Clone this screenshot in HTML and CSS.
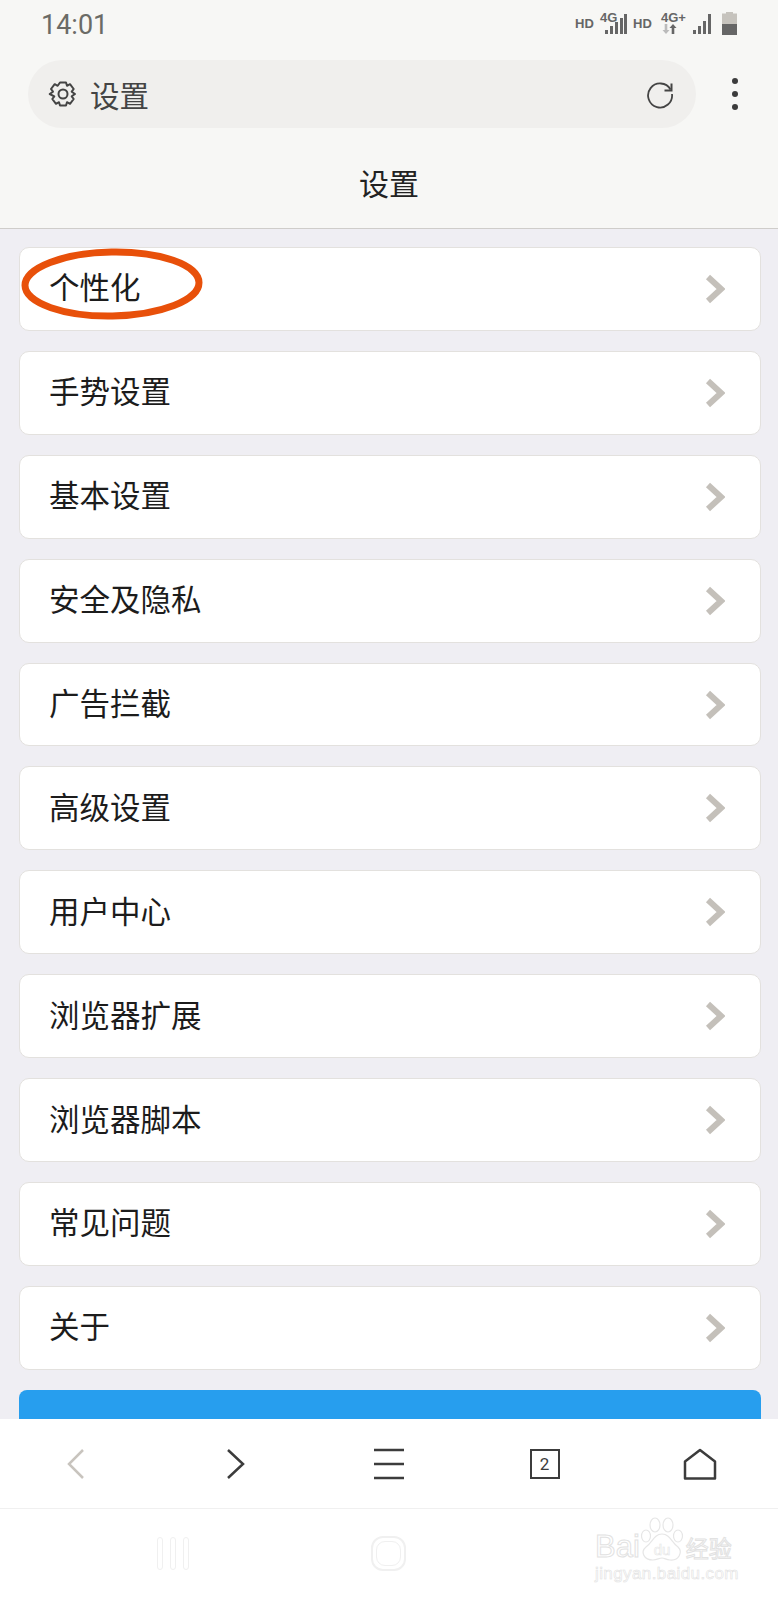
FILE: index.html
```html
<!DOCTYPE html>
<html lang="zh-CN">
<head>
    <meta charset="UTF-8">
    <meta name="viewport" content="width=device-width, initial-scale=1.0">
    <title>设置</title>
    <link rel="stylesheet" href="styles.css">
</head>
<body>
    <div class="screen">
        <div class="header">
            <div class="status-bar">
                <span class="time">14:01</span>
                <svg class="status-icons" width="190" height="50" viewBox="0 0 190 50">
                    <g fill="#666">
                        <text x="15" y="28" class="st-label">HD</text>
                        <text x="40" y="22" class="st-label">4G</text>
                        <rect x="45" y="30" width="3" height="4"/>
                        <rect x="50" y="26" width="3" height="8"/>
                        <rect x="55" y="22" width="3" height="12"/>
                        <rect x="60" y="18" width="3" height="16"/>
                        <rect x="64" y="14" width="3" height="20"/>
                        <text x="73" y="28" class="st-label">HD</text>
                        <text x="101" y="22" class="st-label">4G+</text>
                        <path d="M113 24l-3.500 4h2.200v6h2.600v-6h2.200z"/>
                        <rect x="133" y="30" width="3" height="4"/>
                        <rect x="138" y="26" width="3" height="8"/>
                        <rect x="143" y="21" width="3" height="13"/>
                        <rect x="148" y="14" width="3" height="20"/>
                        <rect x="162" y="24" width="15" height="11"/>
                    </g>
                    <path d="M106 34l-3.500-4h2.200v-6h2.600v6h2.200z" fill="#bbb"/>
                    <path d="M162 24v-10.500h4v-1.500h7v1.500h4v10.500z" fill="#c6c3bd"/>
                </svg>
            </div>
            <div class="url-row">
                <div class="url-bar">
                    <svg class="gear" width="30" height="30" viewBox="0 0 30 30" fill="none" stroke="#444" stroke-width="2">
                        <path d="M12 3.500h6l1 3.300 3-1.600 3.700 4.800-2 2.700 3.300 2.300-3.300 2.300 2 2.700-3.700 4.800-3-1.600-1 3.300h-6l-1-3.300-3 1.600-3.700-4.800 2-2.700L1.700 15 5 12.700l-2-2.700 3.700-4.800 3 1.600z" stroke-linejoin="round"/>
                        <circle cx="15" cy="15" r="4.500"/>
                    </svg>
                    <span class="url-text">设置</span>
                    <svg class="reload" width="30" height="30" viewBox="0 0 30 30" fill="none" stroke="#444" stroke-width="1.800">
                        <path d="M25.500 10.500A12 12 0 1 0 27 15"/>
                        <path d="M26.500 4.500v7h-7" stroke-width="2"/>
                    </svg>
                </div>
                <div class="more-btn"><i></i><i></i><i></i></div>
            </div>
            <div class="page-title">设置</div>
        </div>

        <div class="settings">
            <div class="item">个性化<svg class="arrow" width="20" height="30" viewBox="0 0 20 30"><polyline points="3,3 16,15 3,27"/></svg></div>
            <div class="item">手势设置<svg class="arrow" width="20" height="30" viewBox="0 0 20 30"><polyline points="3,3 16,15 3,27"/></svg></div>
            <div class="item">基本设置<svg class="arrow" width="20" height="30" viewBox="0 0 20 30"><polyline points="3,3 16,15 3,27"/></svg></div>
            <div class="item">安全及隐私<svg class="arrow" width="20" height="30" viewBox="0 0 20 30"><polyline points="3,3 16,15 3,27"/></svg></div>
            <div class="item">广告拦截<svg class="arrow" width="20" height="30" viewBox="0 0 20 30"><polyline points="3,3 16,15 3,27"/></svg></div>
            <div class="item">高级设置<svg class="arrow" width="20" height="30" viewBox="0 0 20 30"><polyline points="3,3 16,15 3,27"/></svg></div>
            <div class="item">用户中心<svg class="arrow" width="20" height="30" viewBox="0 0 20 30"><polyline points="3,3 16,15 3,27"/></svg></div>
            <div class="item">浏览器扩展<svg class="arrow" width="20" height="30" viewBox="0 0 20 30"><polyline points="3,3 16,15 3,27"/></svg></div>
            <div class="item">浏览器脚本<svg class="arrow" width="20" height="30" viewBox="0 0 20 30"><polyline points="3,3 16,15 3,27"/></svg></div>
            <div class="item">常见问题<svg class="arrow" width="20" height="30" viewBox="0 0 20 30"><polyline points="3,3 16,15 3,27"/></svg></div>
            <div class="item">关于<svg class="arrow" width="20" height="30" viewBox="0 0 20 30"><polyline points="3,3 16,15 3,27"/></svg></div>
            <div class="blue-btn"></div>
            <svg class="circle-mark" width="190" height="80" viewBox="0 0 190 80">
                <ellipse cx="91" cy="38" rx="87" ry="32" transform="rotate(-1 91 38)"/>
            </svg>
        </div>

        <div class="toolbar">
            <svg width="34" height="34" viewBox="0 0 34 34" class="tool-icon"><polyline points="22,3 8,17 22,31" stroke="#c8c4be"/></svg>
            <svg width="34" height="34" viewBox="0 0 34 34" class="tool-icon"><polyline points="12,3 27,17 12,31"/></svg>
            <svg width="34" height="34" viewBox="0 0 34 34" class="tool-icon"><path d="M2 3h30M2 17h30M2 31h30"/></svg>
            <div class="tabs-count">2</div>
            <svg width="34" height="34" viewBox="0 0 34 34" class="tool-icon"><path d="M2 31.500V14.500L17 3l15 11.500v17z" stroke-linejoin="round"/></svg>
        </div>

        <div class="nav-bar">
            <div class="nav-recent"><i></i><i></i><i></i></div>
            <div class="nav-home"><i></i></div>
            <div class="nav-spacer"></div>
            <div class="watermark">
                <div class="wm-top">
                    <span>Bai</span>
                    <svg class="wm-paw" width="44" height="46" viewBox="0 0 44 46" fill="none" stroke="#e6e6e6" stroke-width="1.200">
                        <ellipse cx="15" cy="8" rx="5" ry="7"/>
                        <ellipse cx="28" cy="8" rx="5" ry="7"/>
                        <ellipse cx="6" cy="19" rx="4.500" ry="6"/>
                        <ellipse cx="38" cy="19" rx="4.500" ry="6"/>
                        <path d="M22 17c8 0 10 9 16 13 5 5 1 14-8 13-4 0-5-2-8-2s-5 2-9 2C4 43 0 35 6 30c6-4 8-13 16-13z"/>
                        <text x="22" y="38" class="wm-du">du</text>
                    </svg>
                    <span class="wm-cn">经验</span>
                </div>
                <div class="wm-url">jingyan.baidu.com</div>
            </div>
        </div>
    </div>
</body>
</html>
```

FILE: styles.css
```css
* { box-sizing: border-box; }
body { margin: 0; background: #fff; font-family: "Noto Sans CJK SC", "Liberation Sans", sans-serif; }
.screen { width: 778px; height: 1600px; display: flex; flex-direction: column; overflow: hidden; }

/* Topo */
.header { height: 229px; flex: none; background: #f7f7f5; border-bottom: 1px solid #cfcdca; }
.status-bar { height: 50px; padding: 0 28px 0 41px; display: flex; justify-content: space-between; align-items: center; }
.time { font-family: Roboto, sans-serif; font-size: 27px; color: #6b6b66; }
.status-icons { display: block; }
.st-label { font-family: "Liberation Sans", sans-serif; font-size: 13px; font-weight: bold; }
.url-row { display: flex; align-items: center; height: 68px; margin-top: 10px; padding-left: 28px; }
.url-bar { width: 668px; height: 68px; border-radius: 34px; background: #f0efed; display: flex; align-items: center; padding: 0 21px 0 20px; }
.gear { flex: none; }
.url-text { font-size: 29.500px; color: #444; margin-left: 12px; flex: 1; }
.reload { flex: none; }
.more-btn { display: flex; flex-direction: column; gap: 7px; margin-left: 36px; }
.more-btn i { width: 6px; height: 6px; border-radius: 50%; background: #3c3c3c; }
.page-title { text-align: center; font-size: 30px; line-height: 44px; color: #222; margin-top: 32px; }

/* Lista */
.settings { position: relative; flex: 1; min-height: 0; overflow: hidden; background: #efeef3; padding: 18px 17px 0 19px; display: flex; flex-direction: column; gap: 20px; }
.item { flex: none; height: 83.900px; background: #fff; border: 1px solid #e3e1de; border-radius: 10px; padding: 0 35px 5px 29px; display: flex; align-items: center; justify-content: space-between; font-size: 30.500px; color: #1c1c1c; }
.arrow { flex: none; margin-top: 5px; }
.arrow polyline { fill: none; stroke: #c4c0ba; stroke-width: 6; }
.blue-btn { flex: none; height: 60px; background: #279eee; border-radius: 8px 8px 0 0; }
.circle-mark { position: absolute; left: 21px; top: 17px; }
.circle-mark ellipse { fill: none; stroke: #e8500a; stroke-width: 7; }

/* Barra inferior */
.toolbar { flex: none; height: 90px; background: #fff; border-bottom: 1px solid #f0f0f0; display: grid; grid-template-columns: repeat(5, 1fr); align-items: center; justify-items: center; }
.tool-icon { fill: none; stroke: #3c3c3c; stroke-width: 2.500; }
.tabs-count { width: 30px; height: 30px; border: 2px solid #3c3c3c; font-family: Roboto, sans-serif; font-size: 17px; color: #3c3c3c; display: flex; align-items: center; justify-content: center; }

.nav-bar { position: relative; flex: none; height: 91px; background: #fff; display: grid; grid-template-columns: repeat(3, 1fr); align-items: center; justify-items: center; padding-bottom: 2px; }
.nav-recent { display: flex; gap: 7px; margin-left: 86px; }
.nav-recent i { width: 6px; height: 33px; border: 1.500px solid #f0f0f0; border-radius: 3px; }
.nav-home { width: 35px; height: 35px; border: 2px solid #f0f0f0; border-radius: 12px; padding: 3px; }
.nav-home i { display: block; height: 100%; border: 1.500px solid #f0f0f0; border-radius: 9px; }
.watermark { position: absolute; left: 595px; top: 8px; width: 146px; color: transparent; -webkit-text-stroke: 1px #e2e2e2; font-family: "Liberation Sans", sans-serif; }
.wm-top { display: flex; align-items: flex-end; font-size: 31px; line-height: 32px; white-space: nowrap; }
.wm-paw { flex: none; margin: 0 2px 0 0; }
.wm-du { font-size: 15px; text-anchor: middle; stroke-width: 0.600px; }
.wm-cn { font-family: "Noto Sans CJK SC", sans-serif; font-size: 23px; }
.wm-url { font-size: 17px; line-height: 22px; -webkit-text-stroke-width: 0.600px; letter-spacing: 0.400px; }
```
